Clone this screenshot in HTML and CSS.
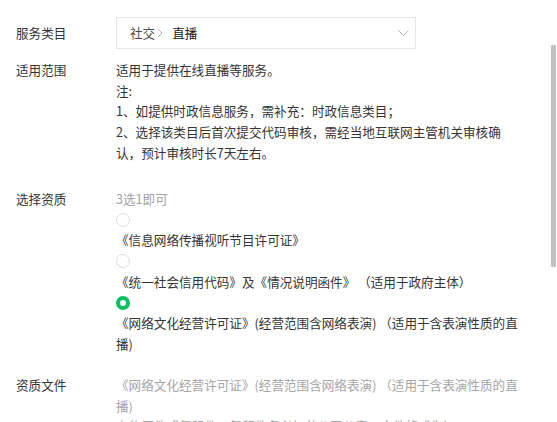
FILE: index.html
```html
<!DOCTYPE html>
<html lang="zh-CN">
<head>
<meta charset="UTF-8">
<meta name="viewport" content="width=device-width, initial-scale=1.0">
<title>服务类目设置</title>
<link rel="stylesheet" href="styles.css">
</head>
<body>
<div class="form">
    <!-- 服务类目 -->
    <div class="row row-select">
        <div class="label label-select">服务类目</div>
        <div class="select">
            <span class="path">
                <span class="lv1">社交</span>
                <svg class="sep" width="6" height="10" viewBox="0 0 6 10"><path d="M1 1l4 4-4 4" fill="none" stroke="#b2b2b2" stroke-width="1"/></svg>
                <span class="lv2">直播</span>
            </span>
            <svg class="arrow" width="11" height="6" viewBox="0 0 11 6"><path d="M0.5 0.5l5 5 5-5" fill="none" stroke="#b2b2b2" stroke-width="1"/></svg>
        </div>
    </div>

    <!-- 适用范围 -->
    <div class="row row-scope">
        <div class="label">适用范围</div>
        <div class="value">
            适用于提供在线直播等服务。<br>
            注:<br>
            1、如提供时政信息服务，需补充：时政信息类目；<br>
            2、选择该类目后首次提交代码审核，需经当地互联网主管机关审核确认，预计审核时长7天左右。
        </div>
    </div>

    <!-- 选择资质 -->
    <div class="row">
        <div class="label">选择资质</div>
        <div class="value">
            <div class="hint">3选1即可</div>
            <label class="option">
                <span class="dot"></span>
                <span>《信息网络传播视听节目许可证》</span>
            </label>
            <label class="option">
                <span class="dot"></span>
                <span>《统一社会信用代码》及《情况说明函件》 （适用于政府主体）</span>
            </label>
            <label class="option">
                <span class="dot on"></span>
                <span>《网络文化经营许可证》(经营范围含网络表演) （适用于含表演性质的直播)</span>
            </label>
        </div>
    </div>

    <!-- 资质文件 -->
    <div class="row">
        <div class="label">资质文件</div>
        <div class="value muted">
            <div>《网络文化经营许可证》(经营范围含网络表演) （适用于含表演性质的直播)</div>
            <div>上传原件或复印件，复印件务必加盖公司公章，文件格式为jpg、png</div>
        </div>
    </div>
</div>
<div class="scroll-thumb"></div>
</body>
</html>
```

FILE: styles.css
```css
html,body {margin:0;padding:0;height:100%;overflow:hidden;background:#fff;}
body {font-family:"Noto Sans CJK SC","Liberation Sans",sans-serif;font-size:12.6px;line-height:20.7px;color:#353535;}
.form {padding:17px 33px 0 16px;}
.row {display:flex;margin-bottom:20.4px;}
.row-select {margin-bottom:11px;}
.row-scope {margin-bottom:25.5px;}
.label {width:100px;flex:none;color:#353535;}
.label-select {line-height:32px;}
.value {flex:1;min-width:0;}
.select {width:300px;height:32px;box-sizing:border-box;border:1px solid #e6e6e6;padding:0 6px 0 13px;display:flex;align-items:center;justify-content:space-between;}
.path {display:flex;align-items:center;}
.lv1 {color:#4a4a4a;}
.lv2 {color:#1a1a1a;}
.sep {margin:0 9px 0 2px;}
.arrow {margin-right:0;}
.hint {color:#a3a3a3;}
.option {display:block;}
.dot {display:block;width:14px;height:14px;box-sizing:border-box;border:1px solid #dcdcdc;border-radius:50%;margin:3.35px 0;}
.dot.on {border:4.5px solid #07c160;background:#fff;}
.muted {color:#a6a6a6;}
.scroll-thumb {position:fixed;left:551px;top:45px;width:5px;height:222px;background:#c1c1c1;}
```
